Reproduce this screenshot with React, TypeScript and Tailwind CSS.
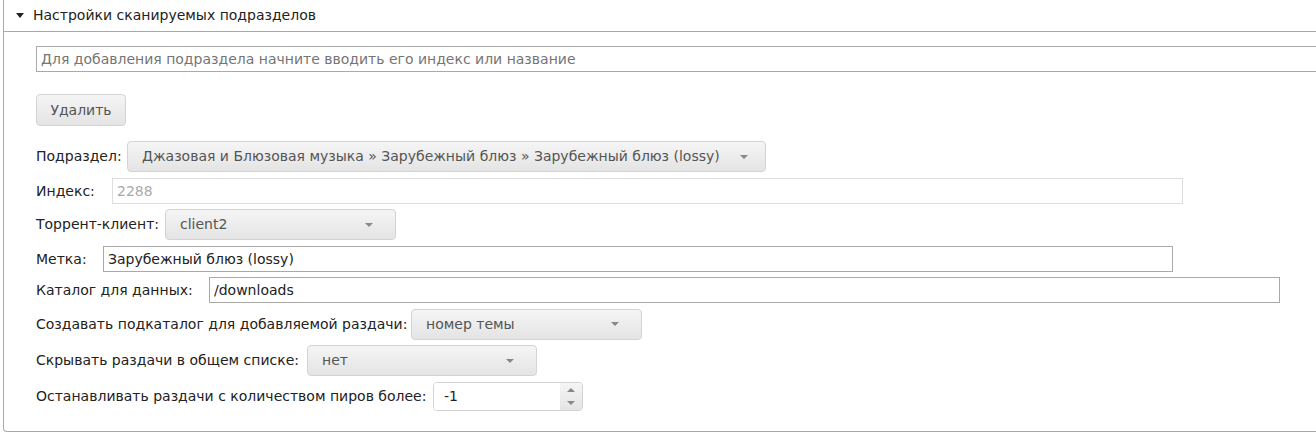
import React from "react";

function Arrow({ up = false, color = "#888" }: { up?: boolean; color?: string }) {
  return (
    <svg width="8" height="4" viewBox="0 0 8 4" className="block">
      <path d={up ? "M0 4h8L4 0z" : "M0 0h8L4 4z"} fill={color} />
    </svg>
  );
}

function SelectBox({ text, className }: { text: string; className: string }) {
  return (
    <div
      className={
        "flex h-[31px] items-center justify-between rounded-[4px] border border-[#d3d3d3] bg-gradient-to-b from-[#f5f5f5] to-[#e4e4e4] pl-[14px] pr-[22px] text-[#555] " +
        className
      }
    >
      <span className="whitespace-nowrap">{text}</span>
      <Arrow />
    </div>
  );
}

export default function App() {
  return (
    <div className="h-[432px] w-[1316px] overflow-hidden bg-white font-['DejaVu_Sans',Verdana,sans-serif] text-[14px] text-[#222]">
      <div className="ml-[3px] h-[432px] w-[1400px] rounded-bl-[4px] border-b border-l border-[#aaaaaa]">
        <div className="flex h-[32px] items-center border-b border-[#aaaaaa] pb-[1px] pl-[12px]">
          <svg width="8" height="5" viewBox="0 0 8 5" className="mr-[9px] block">
            <path d="M0 0h8L4 5z" fill="#222" />
          </svg>
          <span className="whitespace-nowrap">Настройки сканируемых подразделов</span>
        </div>
        <div className="pl-[32px] pt-[14px]">
          <div className="flex h-[26px] w-[1330px] items-center border border-[#aaaaaa] pl-[4px] text-[#757575]">
            <span className="whitespace-nowrap">Для добавления подраздела начните вводить его индекс или название</span>
          </div>
          <div className="mt-[22px] flex h-[32px] w-[90px] items-center justify-center rounded-[4px] border border-[#d3d3d3] bg-gradient-to-b from-[#f5f5f5] to-[#e4e4e4] text-[#555]">
            Удалить
          </div>

          <div className="mt-[15px] flex h-[31px] items-center">
            <span className="w-[91px] whitespace-nowrap">Подраздел:</span>
            <div className="flex h-[31px] w-[639px] items-center justify-between rounded-[4px] border border-[#d3d3d3] bg-gradient-to-b from-[#f5f5f5] to-[#e4e4e4] pl-[14px] pr-[17px] text-[#555]">
              <span className="whitespace-nowrap">Джазовая и Блюзовая музыка » Зарубежный блюз » Зарубежный блюз (lossy)</span>
              <Arrow />
            </div>
          </div>

          <div className="mt-[6px] flex h-[26px] items-center">
            <span className="w-[76px] whitespace-nowrap">Индекс:</span>
            <div className="flex h-[26px] w-[1071px] items-center border border-[#dddddd] pl-[4px] text-[#aaaaaa]">2288</div>
          </div>

          <div className="mt-[5px] flex h-[31px] items-center">
            <span className="w-[129px] whitespace-nowrap">Торрент-клиент:</span>
            <SelectBox text="client2" className="w-[231px]" />
          </div>

          <div className="mt-[6px] flex h-[26px] items-center">
            <span className="w-[67px] whitespace-nowrap">Метка:</span>
            <div className="flex h-[26px] w-[1070px] items-center border border-[#aaaaaa] pl-[4px]">Зарубежный блюз (lossy)</div>
          </div>

          <div className="mt-[5px] flex h-[26px] items-center">
            <span className="w-[173px] whitespace-nowrap">Каталог для данных:</span>
            <div className="flex h-[26px] w-[1071px] items-center border border-[#aaaaaa] pl-[4px]">/downloads</div>
          </div>

          <div className="mt-[5px] flex h-[32px] items-center">
            <span className="w-[375px] whitespace-nowrap">Создавать подкаталог для добавляемой раздачи:</span>
            <SelectBox text="номер темы" className="w-[231px]" />
          </div>

          <div className="mt-[5px] flex h-[31px] items-center">
            <span className="w-[271px] whitespace-nowrap">Скрывать раздачи в общем списке:</span>
            <SelectBox text="нет" className="w-[230px]" />
          </div>

          <div className="mt-[6px] flex h-[29px] items-center">
            <span className="w-[397px] whitespace-nowrap">Останавливать раздачи с количеством пиров более:</span>
            <div className="flex h-[29px] w-[150px] overflow-hidden rounded-[4px] border border-[#d3d3d3]">
              <div className="flex flex-1 items-center bg-white pl-[10px]">-1</div>
              <div className="flex w-[22px] flex-col bg-gradient-to-b from-[#f5f5f5] to-[#e4e4e4]">
                <div className="flex flex-1 items-center justify-center">
                  <Arrow up />
                </div>
                <div className="flex flex-1 items-center justify-center">
                  <Arrow />
                </div>
              </div>
            </div>
          </div>
        </div>
      </div>
    </div>
  );
}
